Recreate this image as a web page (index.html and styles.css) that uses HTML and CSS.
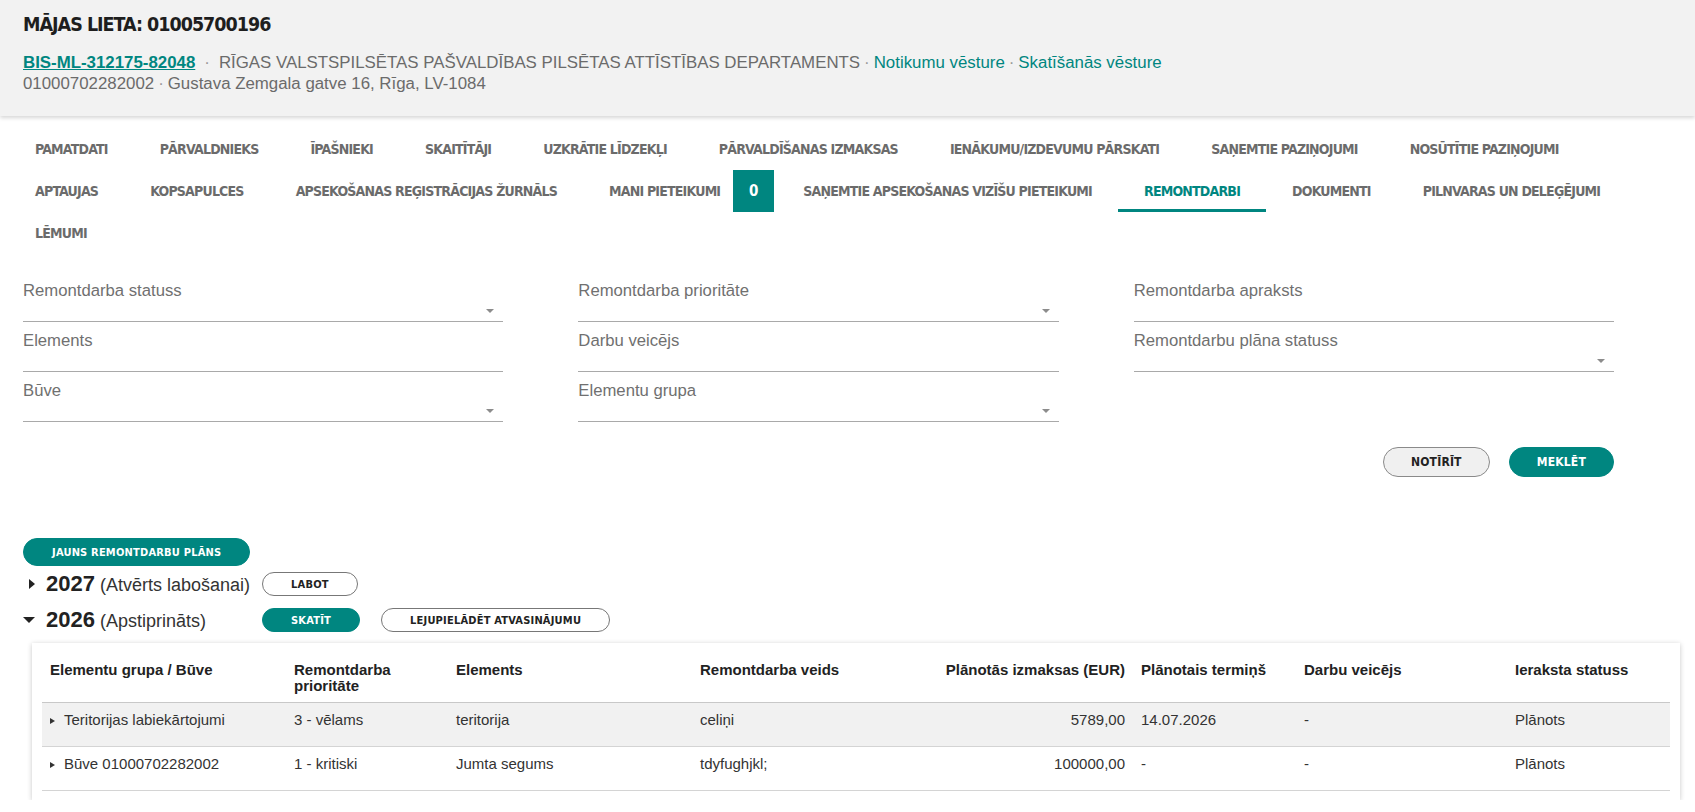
FILE: index.html
```html
<!DOCTYPE html>
<html lang="lv">
<head>
<meta charset="utf-8">
<title>Mājas lieta: 01005700196</title>
<link rel="stylesheet" href="styles.css">
</head>
<body>
<header class="case-header">
  <h1 class="case-title">MĀJAS LIETA: 01005700196</h1>
  <div class="case-meta">
    <a class="case-id" href="#">BIS-ML-312175-82048</a><span class="sep sep-wide">·</span><span>RĪGAS VALSTSPILSĒTAS PAŠVALDĪBAS PILSĒTAS ATTĪSTĪBAS DEPARTAMENTS</span><span class="sep">·</span><a class="meta-link" href="#">Notikumu vēsture</a><span class="sep">·</span><a class="meta-link" href="#">Skatīšanās vēsture</a>
  </div>
  <div class="case-meta">01000702282002<span class="sep">·</span>Gustava Zemgala gatve 16, Rīga, LV-1084</div>
</header>

<nav class="tabs">
  <div class="tab-row">
    <a class="tab" href="#">Pamatdati</a>
    <a class="tab" href="#">Pārvaldnieks</a>
    <a class="tab" href="#">Īpašnieki</a>
    <a class="tab" href="#">Skaitītāji</a>
    <a class="tab" href="#">Uzkrātie līdzekļi</a>
    <a class="tab" href="#">Pārvaldīšanas izmaksas</a>
    <a class="tab" href="#">Ienākumu/izdevumu pārskati</a>
    <a class="tab" href="#">Saņemtie paziņojumi</a>
    <a class="tab" href="#">Nosūtītie paziņojumi</a>
  </div>
  <div class="tab-row">
    <a class="tab" href="#">Aptaujas</a>
    <a class="tab" href="#">Kopsapulces</a>
    <a class="tab" href="#">Apsekošanas reģistrācijas žurnāls</a>
    <a class="tab tab-with-badge" href="#">Mani pieteikumi<span class="tab-badge">0</span></a>
    <a class="tab" href="#">Saņemtie apsekošanas vizīšu pieteikumi</a>
    <a class="tab tab-active" href="#">Remontdarbi</a>
    <a class="tab" href="#">Dokumenti</a>
    <a class="tab" href="#">Pilnvaras un deleģējumi</a>
  </div>
  <div class="tab-row">
    <a class="tab" href="#">Lēmumi</a>
  </div>
</nav>

<section class="filters">
  <div class="field"><div class="field-label">Remontdarba statuss</div><div class="field-input field-select"></div></div>
  <div class="field"><div class="field-label">Remontdarba prioritāte</div><div class="field-input field-select"></div></div>
  <div class="field"><div class="field-label">Remontdarba apraksts</div><div class="field-input"></div></div>
  <div class="field"><div class="field-label">Elements</div><div class="field-input"></div></div>
  <div class="field"><div class="field-label">Darbu veicējs</div><div class="field-input"></div></div>
  <div class="field"><div class="field-label">Remontdarbu plāna statuss</div><div class="field-input field-select"></div></div>
  <div class="field"><div class="field-label">Būve</div><div class="field-input field-select"></div></div>
  <div class="field"><div class="field-label">Elementu grupa</div><div class="field-input field-select"></div></div>
</section>

<div class="filter-actions">
  <button class="btn btn-light btn-lg" type="button">Notīrīt</button>
  <button class="btn btn-primary btn-lg" type="button">Meklēt</button>
</div>

<section class="plans">
  <button class="btn btn-primary btn-md" type="button">Jauns remontdarbu plāns</button>
  <div class="plan-years">
    <div class="year-label"><span class="caret-box"><span class="caret-right"></span></span><strong class="year">2027</strong><span class="year-state">(Atvērts labošanai)</span></div>
    <div class="year-actions"><button class="btn btn-outline btn-sm" type="button">Labot</button></div>
    <div class="year-label"><span class="caret-box"><span class="caret-down"></span></span><strong class="year">2026</strong><span class="year-state">(Apstiprināts)</span></div>
    <div class="year-actions"><button class="btn btn-primary btn-sm" type="button">Skatīt</button><button class="btn btn-outline btn-sm" type="button">Lejupielādēt atvasinājumu</button></div>
  </div>

  <div class="plan-card">
    <table class="plan-table">
      <colgroup>
        <col class="c-group"><col class="c-prio"><col class="c-elem"><col class="c-type"><col class="c-cost"><col class="c-term"><col class="c-exec"><col class="c-status">
      </colgroup>
      <thead>
        <tr>
          <th>Elementu grupa / Būve</th>
          <th>Remontdarba prioritāte</th>
          <th>Elements</th>
          <th>Remontdarba veids</th>
          <th class="num">Plānotās izmaksas (EUR)</th>
          <th>Plānotais termiņš</th>
          <th>Darbu veicējs</th>
          <th>Ieraksta statuss</th>
        </tr>
      </thead>
      <tbody>
        <tr class="row-alt">
          <td><span class="row-caret"></span>Teritorijas labiekārtojumi</td>
          <td>3 - vēlams</td>
          <td>teritorija</td>
          <td>celiņi</td>
          <td class="num">5789,00</td>
          <td>14.07.2026</td>
          <td>-</td>
          <td>Plānots</td>
        </tr>
        <tr>
          <td><span class="row-caret"></span>Būve 01000702282002</td>
          <td>1 - kritiski</td>
          <td>Jumta segums</td>
          <td>tdyfughjkl;</td>
          <td class="num">100000,00</td>
          <td>-</td>
          <td>-</td>
          <td>Plānots</td>
        </tr>
      </tbody>
    </table>
  </div>
</section>
</body>
</html>
```

FILE: styles.css
```css
* { box-sizing: border-box; }

html, body {
  margin: 0;
  padding: 0;
  background: #ffffff;
}

body {
  font-family: "Liberation Sans", Arial, sans-serif;
  color: #333333;
  font-size: 16.7px;
}

a { text-decoration: none; }

/* ---------- header ---------- */
.case-header {
  background: #f2f2f2;
  padding: 11px 23px 22px;
  box-shadow: 0 2px 4px rgba(0, 0, 0, 0.16);
}

.case-title {
  margin: 0;
  font-family: "DejaVu Sans Condensed", "Liberation Sans", sans-serif;
  font-weight: 700;
  font-size: 19.5px;
  letter-spacing: -1px;
  line-height: 28px;
  color: #1e1e1e;
}

.case-meta {
  line-height: 21px;
  font-size: 16.85px;
  color: #6b6b6b;
  white-space: nowrap;
}
.case-title + .case-meta { margin-top: 13px; }

.case-id {
  color: #008680;
  font-weight: 700;
  text-decoration: underline;
}

.meta-link { color: #008680; }

.sep {
  color: #9a9a9a;
  margin: 0 4px;
}
.sep-wide { margin: 0 9px; }

/* ---------- tabs ---------- */
.tabs {
  margin-top: 12px;
  padding-left: 9px;
}

.tab-row {
  display: flex;
  height: 42px;
}

.tab {
  display: flex;
  align-items: center;
  padding: 0 26px;
  font-family: "DejaVu Sans Condensed", "Liberation Sans", sans-serif;
  font-weight: 700;
  font-size: 14px;
  letter-spacing: -0.8px;
  text-transform: uppercase;
  color: #6b6b6b;
  white-space: nowrap;
}

.tab-with-badge { padding-right: 3px; }

.tab-badge {
  display: flex;
  align-items: center;
  justify-content: center;
  align-self: stretch;
  width: 41px;
  margin-left: 13px;
  background: #008680;
  color: #ffffff;
  font-size: 15px;
  letter-spacing: 0;
}

.tab-active {
  color: #008680;
  box-shadow: inset 0 -3px 0 #008680;
}

/* ---------- filters ---------- */
.filters {
  margin: 18px 0 0 23px;
  width: 1591px;
  display: grid;
  grid-template-columns: repeat(3, 1fr);
  column-gap: 75px;
}

.field { padding-top: 9px; }

.field-label {
  line-height: 20px;
  color: #707070;
}

.field-input {
  position: relative;
  height: 21px;
  border-bottom: 1px solid #a9a9a9;
}

.field-select::after {
  content: "";
  position: absolute;
  right: 9px;
  bottom: 8px;
  border-left: 4px solid transparent;
  border-right: 4px solid transparent;
  border-top: 4px solid #8c8c8c;
}

.filter-actions {
  margin: 25px 0 0 23px;
  width: 1591px;
  display: flex;
  justify-content: flex-end;
  gap: 19px;
}

/* ---------- buttons ---------- */
.btn {
  display: inline-flex;
  align-items: center;
  justify-content: center;
  padding: 0 28px;
  border: 1px solid transparent;
  font-family: "DejaVu Sans Condensed", "Liberation Sans", sans-serif;
  font-weight: 700;
  font-size: 11px;
  letter-spacing: 0.2px;
  text-transform: uppercase;
  white-space: nowrap;
  cursor: pointer;
}

.btn-lg { height: 30px; border-radius: 15px; font-size: 12px; padding: 0 27px; }
.btn-md { height: 28px; border-radius: 14px; }
.btn-sm { height: 24px; border-radius: 12px; }

.btn-primary {
  background: #008680;
  border-color: #008680;
  color: #ffffff;
}

.btn-light {
  background: #f0f0f0;
  border-color: #8a8a8a;
  color: #222222;
}

.btn-outline {
  background: #ffffff;
  border-color: #777777;
  color: #222222;
}

/* ---------- plans ---------- */
.plans {
  margin: 61px 0 0 23px;
}

.plan-years {
  display: grid;
  grid-template-columns: max-content 1fr;
  grid-auto-rows: 36px;
  column-gap: 12px;
}

.year-label {
  display: flex;
  align-items: baseline;
  align-self: center;
  white-space: nowrap;
}

.caret-box {
  width: 12px;
  margin-right: 11px;
  display: flex;
  justify-content: flex-end;
  align-self: center;
}

.caret-right {
  width: 0;
  height: 0;
  border-top: 5px solid transparent;
  border-bottom: 5px solid transparent;
  border-left: 6px solid #222222;
}

.caret-down {
  width: 0;
  height: 0;
  border-left: 6px solid transparent;
  border-right: 6px solid transparent;
  border-top: 6px solid #222222;
}

.year {
  font-size: 22px;
  font-weight: 700;
  color: #222222;
}

.year-state {
  margin-left: 5px;
  font-size: 18px;
  color: #333333;
}

.year-actions {
  display: flex;
  align-items: center;
  gap: 21px;
}

.plan-card {
  margin: 5px 0 0 9px;
  width: 1648px;
  padding: 10px 10px 9px;
  background: #ffffff;
  box-shadow: 0 1px 5px rgba(0, 0, 0, 0.22);
}

.plan-table {
  width: 100%;
  border-collapse: collapse;
  table-layout: fixed;
  font-size: 15px;
  line-height: 16px;
}

.c-group { width: 244px; }
.c-prio { width: 162px; }
.c-elem { width: 244px; }
.c-type { width: 244px; }
.c-cost { width: 197px; }
.c-term { width: 163px; }
.c-exec { width: 211px; }
.c-status { width: 163px; }

.plan-table th {
  text-align: left;
  vertical-align: top;
  font-weight: 700;
  color: #222222;
  padding: 9px 8px 8px;
  border-bottom: 1px solid #c8c8c8;
}

.plan-table td {
  vertical-align: top;
  color: #333333;
  padding: 9px 8px 18px;
  border-bottom: 1px solid #d4d4d4;
}

.plan-table .num { text-align: right; }

.row-alt td { background: #f1f1f1; }

.row-caret {
  display: inline-block;
  width: 0;
  height: 0;
  border-top: 3.5px solid transparent;
  border-bottom: 3.5px solid transparent;
  border-left: 5px solid #333333;
  margin-right: 9px;
  vertical-align: 1px;
}
```
